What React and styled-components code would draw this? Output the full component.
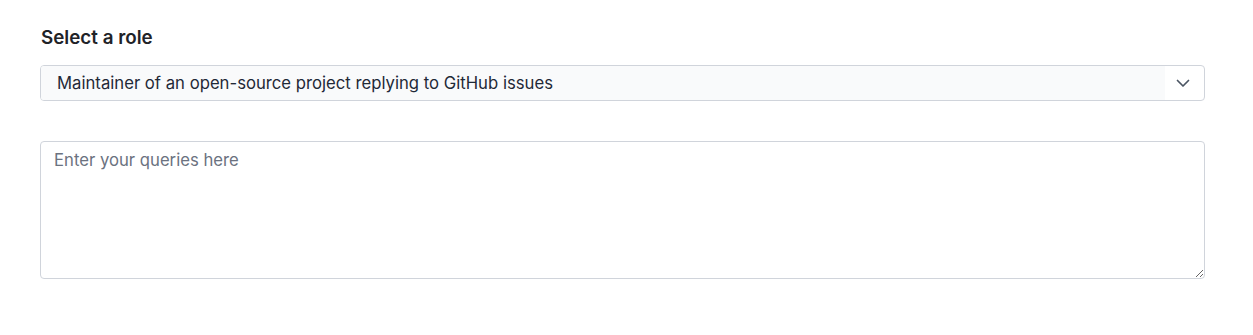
import styled, { createGlobalStyle } from "styled-components"

const Global = createGlobalStyle`
  body {
    margin: 0;
    background: #fff;
    font-family: Inter, "Noto Sans", sans-serif;
  }
`

const Page = styled.div`
  padding: 25px 48px 0 40px;
  display: flex;
  flex-direction: column;
`

const Label = styled.label`
  font-size: 18.8px;
  font-weight: 600;
  color: #1f2328;
  line-height: 26px;
  margin-bottom: 14px;
  padding-left: 1px;
`

const SelectWrap = styled.div`
  display: flex;
  align-items: stretch;
  height: 36px;
  box-sizing: border-box;
  border: 1px solid #d0d4db;
  border-radius: 4px;
  overflow: hidden;
  background: #fff;
`

const SelectValue = styled.div`
  flex: 1;
  display: flex;
  align-items: center;
  padding-left: 16px;
  background: #f9fafb;
  font-size: 16.7px;
  color: #1f2937;
`

const Chevron = styled.div`
  width: 39px;
  display: flex;
  align-items: center;
  justify-content: center;
  padding-right: 4px;
  box-sizing: border-box;
  color: #4b5563;
`

const TextArea = styled.textarea`
  margin-top: 40px;
  height: 138px;
  box-sizing: border-box;
  border: 1px solid #d0d4db;
  border-radius: 4px;
  padding: 8px 13px;
  font-family: Inter, "Noto Sans", sans-serif;
  font-size: 16.7px;
  line-height: 20px;
  color: #1f2937;
  resize: vertical;
  outline: none;

  &::placeholder {
    color: #6b7280;
  }
`

export default function App() {
  return (
    <>
      <Global />
      <Page>
        <Label>Select a role</Label>
        <SelectWrap>
          <SelectValue>Maintainer of an open-source project replying to GitHub issues</SelectValue>
          <Chevron>
            <svg width="16" height="16" viewBox="0 0 16 16" fill="none">
              <path d="M2.5 5.5l5.5 5.5 5.5-5.5" stroke="currentColor" strokeWidth="1.7" strokeLinecap="round" strokeLinejoin="round" />
            </svg>
          </Chevron>
        </SelectWrap>
        <TextArea placeholder="Enter your queries here" />
      </Page>
    </>
  )
}
